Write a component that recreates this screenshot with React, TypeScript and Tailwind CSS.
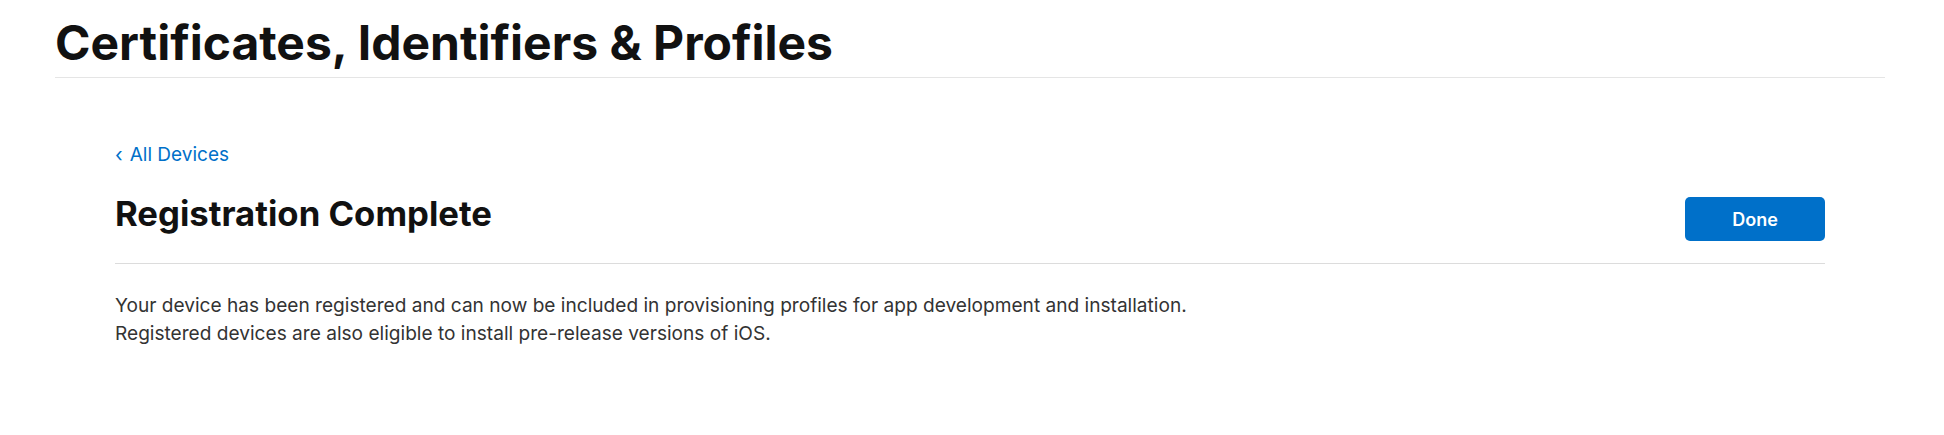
import React from 'react';

export default function App() {
  return (
    <div className="min-h-screen bg-white font-['Inter',sans-serif] text-[#111]">
      <div className="ml-[55px] mr-[59px]">
        <header className="border-b border-[#e5e5e5] pt-[14px] pb-[5px]">
          <h1 className="text-[48px] font-bold leading-[58px]">
            Certificates, Identifiers &amp; Profiles
          </h1>
        </header>

        <section className="mx-[60px] pt-[65px]">
          <a href="#" className="flex items-center gap-[7px] text-[19px] leading-[24px] text-[#0070c9]">
            <span className="text-[20px] leading-none">‹</span>
            <span>All Devices</span>
          </a>

          <div className="flex items-center justify-between border-b border-[#dcdcdc] pt-[24px] pb-[16px]">
            <h2 className="pb-[12px] text-[34.7px] font-bold leading-[44px]">Registration Complete</h2>
            <button className="h-[44px] w-[140px] rounded-[5px] bg-[#0070c9] text-[18px] font-semibold text-white">
              Done
            </button>
          </div>

          <p className="pt-[27px] text-[19.1px] leading-[28px] text-[#333]">
            Your device has been registered and can now be included in provisioning profiles for app development and installation.
            <br />
            Registered devices are also eligible to install pre-release versions of iOS.
          </p>
        </section>
      </div>
    </div>
  );
}
